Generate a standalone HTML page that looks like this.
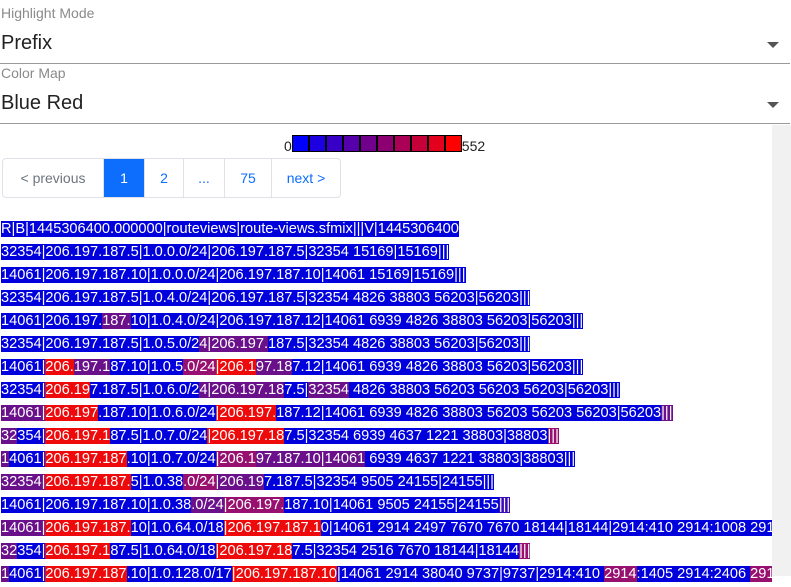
<!DOCTYPE html>
<html><head><meta charset="utf-8"><style>
body{margin:0;width:791px;height:576px;overflow:hidden;background:#fff;font-family:"Liberation Sans",sans-serif;position:relative}
.lbl{position:absolute;left:1px;font-size:14px;color:#8a8a8a}
.val{position:absolute;left:1px;font-size:20px;color:#222}
.line{position:absolute;left:0;width:790px;height:1px;background:#9a9a9a}
.caret{position:absolute;left:767px;width:0;height:0;border-left:6px solid transparent;border-right:6px solid transparent;border-top:6px solid #555}
.sb{position:absolute;left:772px;top:125px;width:19px;height:451px;background:#f1f1f1}
.legend{position:absolute;left:284px;top:135px;font-size:14px;color:#222;display:flex;align-items:flex-start}
.legend i{display:inline-block;width:15px;height:15px;border:1px solid #000;margin-left:0}
.legend span.z{margin-top:3px}
.pg{position:absolute;left:2px;top:158px;height:38px;display:flex;border:1px solid #dee2e6;border-radius:4px;overflow:hidden;font-size:14px}
.pg div{border-left:1px solid #dee2e6;display:flex;align-items:center;justify-content:center;color:#0d6efd}
.pg div:first-child{border-left:none;color:#6c757d}
.pg .a{background:#0d6efd;color:#fff}
.rows{position:absolute;left:1px;top:219px;width:771px;overflow:hidden}
.r{white-space:nowrap;height:20px;line-height:20px;margin-bottom:3px;font-size:14.6px;color:#fff;letter-spacing:0}
.r span{background:#0000dd}
.r span.p1{background:#3a0ab8}.r span.p2{background:#6a108a}.r span.p3{background:#971070}.r span.x{background:#ee0a0a}
</style></head><body>
<div class="lbl" style="top:5px">Highlight Mode</div>
<div class="val" style="top:32px">Prefix</div>
<div class="caret" style="top:42px"></div>
<div class="line" style="top:63px"></div>
<div class="lbl" style="top:65px">Color Map</div>
<div class="val" style="top:92px">Blue Red</div>
<div class="caret" style="top:102px"></div>
<div class="line" style="top:123px"></div>
<div class="sb"></div>
<div class="legend"><span class="z">0</span><i style="background:#0000ff"></i><i style="background:#1c00e2"></i><i style="background:#3800c6"></i><i style="background:#5500aa"></i><i style="background:#71008d"></i><i style="background:#8d0071"></i><i style="background:#aa0055"></i><i style="background:#c60038"></i><i style="background:#e2001c"></i><i style="background:#ff0000"></i><span class="z">552</span></div>
<div class="pg"><div style="width:100px">&lt; previous</div><div class="a" style="width:40px">1</div><div style="width:38px">2</div><div style="width:40px">...</div><div style="width:46px">75</div><div style="width:68px">next &gt;</div></div>
<div class="rows">
<div class="r"><span>R|B|1445306400.000000|routeviews|route-views.sfmix|||V|1445306400</span></div>
<div class="r"><span>32354|206.197.187.5|1.0.0.0/24|206.197.187.5|32354 15169|15169|||</span></div>
<div class="r"><span>14061|206.197.187.10|1.0.0.0/24|206.197.187.10|14061 15169|15169|||</span></div>
<div class="r"><span>32354|206.197.187.5|1.0.4.0/24|206.197.187.5|32354 4826 38803 56203|56203|||</span></div>
<div class="r"><span>14061|206.197.</span><span class="p2">187.</span><span>10|1.0.4.0/24|206.197.187.12|14061 6939 4826 38803 56203|56203|||</span></div>
<div class="r"><span>32354|206.197.187.5|1.0.5.0/2</span><span class="p2">4|206.197.</span><span>187.5|32354 4826 38803 56203|56203|||</span></div>
<div class="r"><span>14061|</span><span class="x">206.</span><span class="p2">197.1</span><span>87.10|1.0.5</span><span class="p3">.0/24</span><span class="x">|206.1</span><span class="p2">97.18</span><span>7.12|14061 6939 4826 38803 56203|56203|||</span></div>
<div class="r"><span>32354|</span><span class="x">206.19</span><span>7.187.5|1.0.6.0/2</span><span class="p2">4|206.197.18</span><span>7.5|</span><span class="p2">32354</span><span> 4826 38803 56203 56203 56203|56203|||</span></div>
<div class="r"><span class="p2">14061|</span><span class="x">206.197</span><span>.187.10|1.0.6.0/24</span><span class="x">|206.197.</span><span>187.12|14061 6939 4826 38803 56203 56203 56203|56203</span><span class="p2">|||</span></div>
<div class="r"><span class="p2">32</span><span>354|</span><span class="x">206.197.1</span><span>87.5|1.0.7.0/24</span><span class="x">|206.197.18</span><span>7.5|32354 6939 4637 1221 38803|38803</span><span class="p3">|||</span></div>
<div class="r"><span class="p2">1</span><span>4061|</span><span class="x">206.197.187</span><span>.10|1.0.7.0/24</span><span class="p3">|206.1</span><span class="p2">97.187.10|14061</span><span> 6939 4637 1221 38803|38803|||</span></div>
<div class="r"><span class="p2">32354|</span><span class="x">206.197.187.</span><span>5|1.0.38</span><span class="p3">.0/24</span><span class="p2">|206.19</span><span>7.187.5|32354 9505 24155|24155|||</span></div>
<div class="r"><span>14061|206.197.187.10|1.0.38</span><span class="p2">.0/24</span><span class="p3">|206.197.</span><span>187.10|14061 9505 24155|24155</span><span class="p1">|||</span></div>
<div class="r"><span class="p2">14061|</span><span class="x">206.197.187.</span><span>10|1.0.64.0/18</span><span class="x">|206.197.187.1</span><span>0|14061 2914 2497 7670 7670 18144|18144|2914:410 2914:1008 2914:1008 2914</span></div>
<div class="r"><span class="p2">32</span><span>354|</span><span class="x">206.197.1</span><span>87.5|1.0.64.0/18</span><span class="x">|206.197.18</span><span>7.5|32354 2516 7670 18144|18144</span><span class="p3">|||</span></div>
<div class="r"><span class="p2">1</span><span>4061|</span><span class="x">206.197.187</span><span>.10|1.0.128.0/17</span><span class="x">|206.197.187.10</span><span>|14061 2914 38040 9737|9737|2914:410 </span><span class="p3">2914</span><span>:1405 2914:2406 </span><span class="p3">2914</span><span>:1008 2914</span></div>
</div>
</body></html>
